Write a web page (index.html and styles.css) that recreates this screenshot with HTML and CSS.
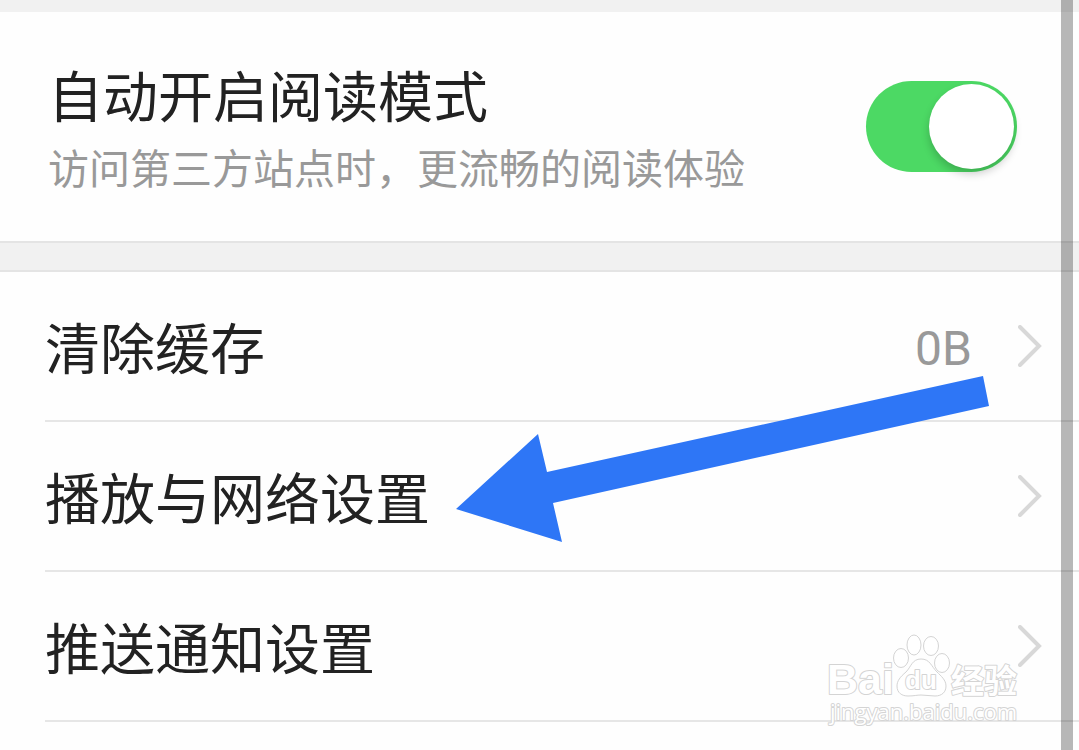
FILE: index.html
```html
<!DOCTYPE html>
<html lang="zh-CN">
<head>
    <meta charset="UTF-8">
    <meta name="viewport" content="width=device-width, initial-scale=1.0">
    <title>设置</title>
    <link rel="stylesheet" href="styles.css">
</head>
<body>

    <main class="settings">
        <!-- 阅读模式 -->
        <section class="reading">
            <label class="reading-text" for="readingMode">
                <span class="title">自动开启阅读模式</span>
                <span class="desc">访问第三方站点时，更流畅的阅读体验</span>
            </label>
            <input class="switch" type="checkbox" id="readingMode" checked>
        </section>

        <!-- 设置列表 -->
        <section class="list">
            <button class="row" type="button">
                <span class="title">清除缓存</span>
                <span class="value">0B</span>
                <svg class="chevron" viewBox="0 0 24 42"><path d="M2 2 L21 21 L2 40"/></svg>
            </button>
            <button class="row" type="button">
                <span class="title">播放与网络设置</span>
                <svg class="chevron" viewBox="0 0 24 42"><path d="M2 2 L21 21 L2 40"/></svg>
            </button>
            <button class="row" type="button">
                <span class="title">推送通知设置</span>
                <svg class="chevron" viewBox="0 0 24 42"><path d="M2 2 L21 21 L2 40"/></svg>
            </button>

            <!-- 箭头 -->
            <svg class="arrow" viewBox="0 0 534 168">
                <polygon points="0,134 82,59 91,97 527,1 533,31 97,128 106,167"/>
            </svg>
        </section>
    </main>

    <div class="scrollbar"></div>

    <!-- 水印 -->
    <svg class="watermark" viewBox="0 0 200 100">
        <g class="paw">
            <ellipse cx="79" cy="28" rx="7.5" ry="9.5"/>
            <ellipse cx="92" cy="15" rx="7" ry="10"/>
            <ellipse cx="109" cy="16" rx="7.5" ry="9.5"/>
            <ellipse cx="120" cy="33" rx="7.5" ry="9.5"/>
            <path d="M99 29 C90 29 89 37 84 42 C78 47 75 51 75 56 C75 63 80 66 86 66 C92 66 95 65 99 65 C104 65 108 66 113 66 C120 66 124 62 124 56 C124 50 119 46 115 42 C109 36 108 29 99 29 Z"/>
        </g>
        <text class="brand" x="5" y="64">Bai</text>
        <text class="brand-du" x="83" y="59">du</text>
        <text class="brand-cn" x="129" y="63">经验</text>
        <text class="site" x="8" y="90">jingyan.baidu.com</text>
    </svg>

</body>
</html>
```

FILE: styles.css
```css
* {
    box-sizing: border-box;
}
body {
    position: relative;
    margin: 0;
    min-height: 100vh;
    overflow: hidden;
    background-color: #fefefe;
    color: #222;
    font-family: Roboto, "Noto Sans CJK SC", sans-serif;
}
.settings {
    border-top: 12px solid #f1f1f1;
}
.reading {
    display: flex;
    align-items: center;
    justify-content: space-between;
    padding: 46px 62px 47px 48px;
    border-bottom: 2px solid #e4e4e4;
}
.reading-text {
    display: flex;
    flex-direction: column;
    gap: 8px;
}
.title {
    font-size: 55px;
    line-height: 80px;
}
.desc {
    color: #999;
    font-size: 41px;
    line-height: 48px;
}
.switch {
    appearance: none;
    display: flex;
    align-items: center;
    justify-content: flex-end;
    flex: none;
    width: 151px;
    height: 91px;
    margin: 0;
    padding: 3px;
    border-radius: 46px;
    background-color: #4cd964;
    cursor: pointer;
}
.switch::before {
    content: "";
    width: 85px;
    height: 85px;
    border-radius: 50%;
    background-color: #fff;
    box-shadow: 0 5px 8px rgba(0, 0, 0, 0.2);
}
.switch:not(:checked) {
    justify-content: flex-start;
    background-color: #ddd;
}
.list {
    position: relative;
    padding-top: 2px;
    padding-left: 45px;
    border-top: 27px solid #f1f1f1;
    box-shadow: inset 0 2px #e4e4e4;
}
.row {
    display: flex;
    align-items: center;
    width: 100%;
    height: 150px;
    padding: 0 37px 0 0;
    border: none;
    border-bottom: 2px solid #e6e6e6;
    background: none;
    color: inherit;
    font-family: inherit;
    text-align: left;
    cursor: pointer;
}
.row .title {
    flex: 1;
    padding-top: 8px;
}
.value {
    margin-right: 46px;
    padding-top: 4px;
    color: #999;
    font-size: 48px;
}
.chevron {
    width: 24px;
    height: 42px;
    fill: none;
    stroke: #d8d8d8;
    stroke-width: 4;
    stroke-linecap: round;
}
.arrow {
    position: absolute;
    top: 105px;
    left: 456px;
    width: 534px;
    height: 168px;
    fill: #2e76f6;
    pointer-events: none;
}
.scrollbar {
    position: absolute;
    top: 0;
    right: 6px;
    bottom: 0;
    width: 12px;
    background-color: rgba(0, 0, 0, 0.28);
}
.watermark {
    position: absolute;
    right: 57px;
    bottom: 20px;
    width: 200px;
    height: 100px;
    fill: #fff;
    stroke: #d4d4d4;
    stroke-width: 1;
    pointer-events: none;
}
.watermark text {
    paint-order: stroke;
    stroke-width: 2;
    stroke-linejoin: round;
    font-weight: bold;
}
.brand {
    font-family: "Liberation Sans", Arial, sans-serif;
    font-size: 43px;
}
.brand-du {
    font-family: "Liberation Sans", Arial, sans-serif;
    font-size: 26px;
}
.brand-cn {
    font-family: "Noto Sans CJK SC", sans-serif;
    font-size: 33px;
}
.watermark .site {
    font-family: "Open Sans", sans-serif;
    font-size: 22px;
    font-weight: normal;
}
```
